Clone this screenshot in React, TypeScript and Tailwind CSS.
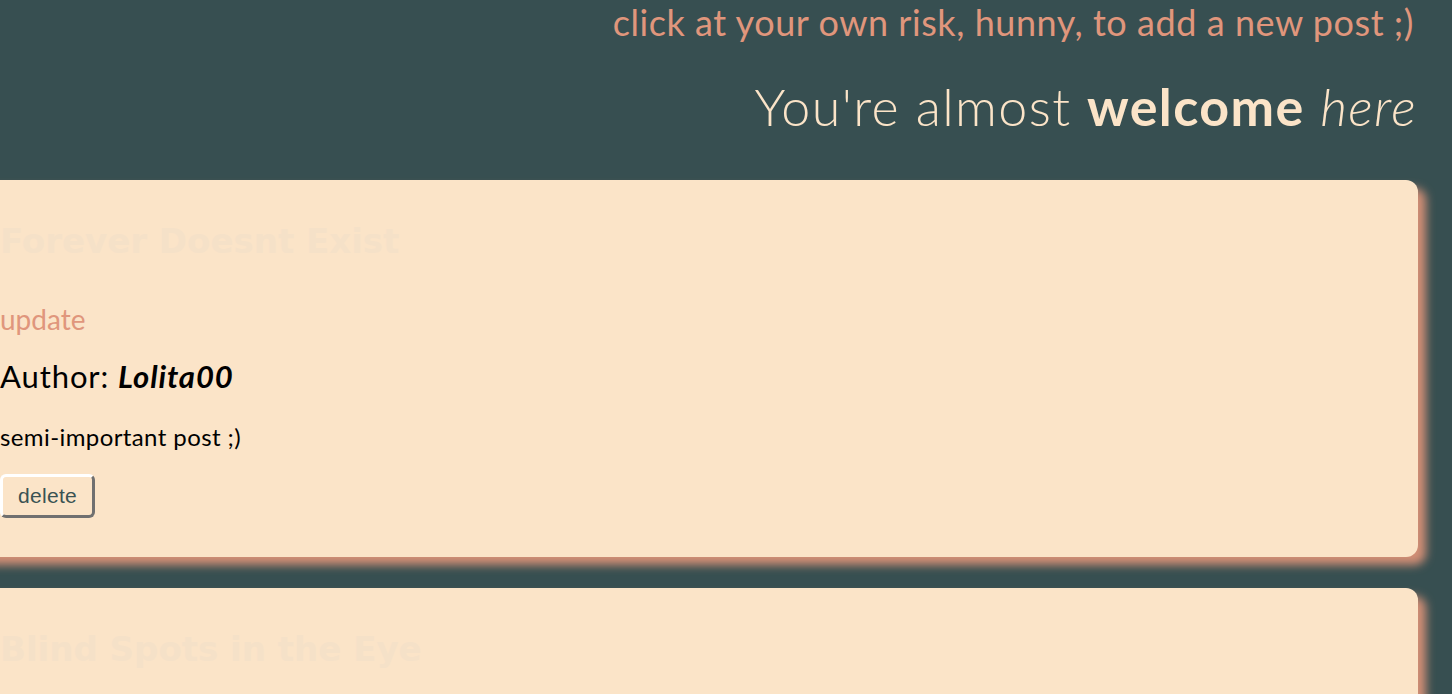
export default function App() {
  const posts = [
    { title: "Forever Doesnt Exist", author: "Lolita00", body: "semi-important post ;)" },
    { title: "Blind Spots in the Eye", author: "Lolita00", body: "semi-important post ;)" },
  ];

  return (
    <div className="h-screen bg-[#374f51] font-['Lato','Open_Sans',sans-serif] overflow-hidden">
      {/* Header */}
      <header className="flex flex-col items-end pr-[38px]">
        <a className="text-[36px] leading-[44px] tracking-[0.55px] text-[#e0967c] cursor-pointer">
          click at your own risk, hunny, to add a new post ;)
        </a>
        <h2 className="mt-[32px] text-[52px] leading-[60px] tracking-[1.4px] font-light text-[#fbe4c8] -mr-[3px]">
          You're almost <span className="font-bold">welcome</span> <em className="font-light">here</em>
        </h2>
      </header>

      {/* Posts */}
      <main className="mt-[44px] flex flex-col gap-[31px] mr-[34px]">
        {posts.map((post) => (
          <article
            key={post.title}
            className="-ml-10 pl-10 pt-[40px] pb-[40px] h-[377px] shrink-0 bg-[#fbe4c8] rounded-[12px] shadow-[8px_8px_10px_#d38f76]"
          >
            <h1 className="font-['DejaVu_Sans',sans-serif] font-bold text-[34px] leading-[42px] text-[#f5e1c8]">
              {post.title}
            </h1>
            <a className="block mt-[40px] text-[28px] leading-[34px] text-[#e0967c] cursor-pointer">update</a>
            <p className="mt-[22px] text-[31px] leading-[36px] tracking-[0.9px] text-black">
              Author: <span className="font-bold italic">{post.author}</span>
            </p>
            <p className="mt-[28px] text-[24px] leading-[30px] tracking-[0.4px] text-black">{post.body}</p>
            <button className="mt-[22px] px-[15px] py-[7px] font-['Liberation_Sans',sans-serif] text-[21px] leading-[24px] tracking-[0.3px] text-[#3a5253] bg-[#fbe4c8] rounded-[6px] border-[3px] border-t-white border-l-white border-r-[#707070] border-b-[#707070]">
              delete
            </button>
          </article>
        ))}
      </main>
    </div>
  );
}
